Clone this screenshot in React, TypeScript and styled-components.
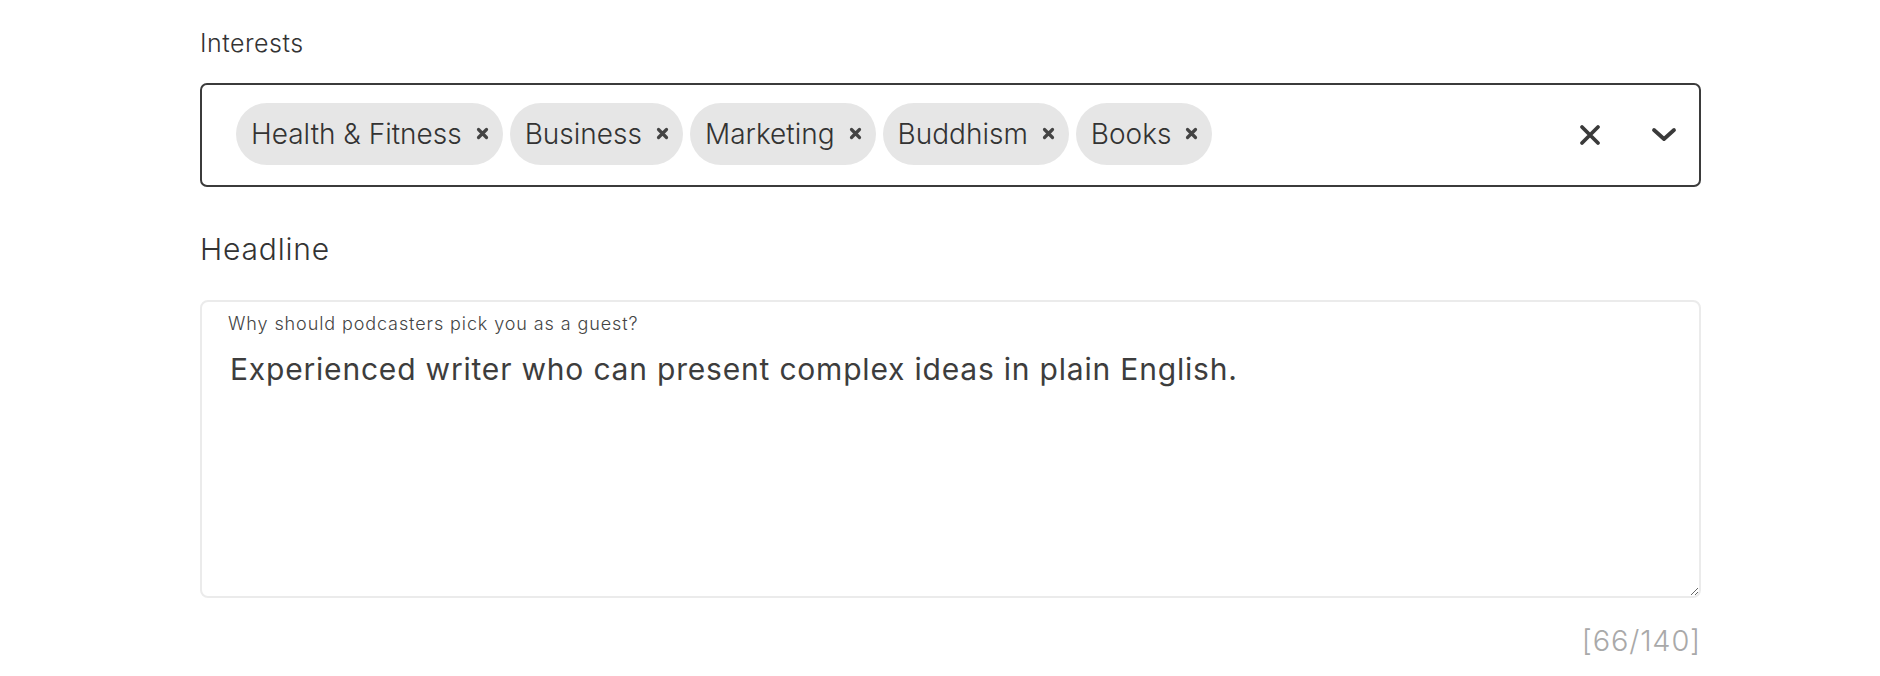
import styled, { createGlobalStyle } from "styled-components";

const GlobalStyle = createGlobalStyle`
  body {
    margin: 0;
    background: #ffffff;
    font-family: "Inter", "Noto Sans", sans-serif;
    color: #333333;
  }
`;

const Page = styled.div`
  width: 1501px;
  padding: 28px 0 0 200px;
`;

const FieldLabel = styled.div<{ $size: number; $spacing: number }>`
  font-size: ${(p) => p.$size}px;
  letter-spacing: ${(p) => p.$spacing}px;
  font-weight: 300;
  line-height: 1.2;
  color: #333333;
`;

const SelectBox = styled.div`
  box-sizing: border-box;
  height: 104px;
  margin-top: 25px;
  border: 2px solid #3b3b3b;
  border-radius: 7px;
  display: flex;
  align-items: center;
  padding: 0 22px 3px 34px;
`;

const ChipList = styled.div`
  flex: 1;
  display: flex;
  align-items: center;
  gap: 7px;
`;

const Chip = styled.div`
  height: 62px;
  display: flex;
  align-items: center;
  gap: 14px;
  padding: 0 14px 0 15px;
  border-radius: 31px;
  background: #e6e6e6;
  font-size: 28px;
  font-weight: 300;
  color: #333333;
`;

const Indicators = styled.div`
  display: flex;
  align-items: center;
  gap: 50px;
  padding-top: 3px;
`;

const IconButton = styled.span`
  display: flex;
  align-items: center;
  justify-content: center;
  color: #3a3a3a;
`;

const HeadlineLabel = styled(FieldLabel)`
  margin-top: 44px;
`;

const TextBox = styled.div`
  position: relative;
  box-sizing: border-box;
  height: 298px;
  margin-top: 33px;
  border: 2px solid #ebebeb;
  border-radius: 8px;
  overflow: hidden;
`;

const FloatLabel = styled.label`
  position: absolute;
  top: 11px;
  left: 26px;
  font-size: 18px;
  font-weight: 300;
  letter-spacing: 0.9px;
  line-height: 1.2;
  color: #444444;
  pointer-events: none;
`;

const TextArea = styled.textarea`
  box-sizing: border-box;
  display: block;
  width: 100%;
  height: 100%;
  border: none;
  outline: none;
  resize: vertical;
  padding: 49px 20px 10px 28px;
  font-family: "Inter", "Noto Sans", sans-serif;
  font-size: 30px;
  font-weight: 400;
  letter-spacing: 0.8px;
  line-height: 1.2;
  color: #3d3d3d;
  background: transparent;
`;

const Counter = styled.div`
  margin-top: 26px;
  text-align: right;
  font-size: 29px;
  font-weight: 300;
  letter-spacing: 0.8px;
  line-height: 1.2;
  color: #a9a9a9;
`;

const SmallX = () => (
  <svg width="13" height="13" viewBox="0 0 13 13">
    <path d="M2.5 2.5 L10.5 10.5 M10.5 2.5 L2.5 10.5" stroke="#444" strokeWidth="3.2" strokeLinecap="round" />
  </svg>
);

const interests = ["Health & Fitness", "Business", "Marketing", "Buddhism", "Books"];
const headline = "Experienced writer who can present complex ideas in plain English.";

export default function App() {
  return (
    <>
      <GlobalStyle />
      <Page>
        <FieldLabel $size={25} $spacing={0.5}>Interests</FieldLabel>
        <SelectBox>
          <ChipList>
            {interests.map((name) => (
              <Chip key={name}>
                {name}
                <SmallX />
              </Chip>
            ))}
          </ChipList>
          <Indicators>
            <IconButton>
              <svg width="22" height="22" viewBox="0 0 22 22">
                <path d="M3 3 L19 19 M19 3 L3 19" stroke="#3a3a3a" strokeWidth="3.8" strokeLinecap="round" />
              </svg>
            </IconButton>
            <IconButton>
              <svg width="26" height="16" viewBox="0 0 26 16">
                <path d="M3 3 L13 12 L23 3" fill="none" stroke="#3a3a3a" strokeWidth="3.8" strokeLinecap="round" strokeLinejoin="round" />
              </svg>
            </IconButton>
          </Indicators>
        </SelectBox>
        <HeadlineLabel $size={30} $spacing={0.8}>Headline</HeadlineLabel>
        <TextBox>
          <FloatLabel htmlFor="headline">Why should podcasters pick you as a guest?</FloatLabel>
          <TextArea id="headline" defaultValue={headline} maxLength={140} />
        </TextBox>
        <Counter>[{headline.length}/140]</Counter>
      </Page>
    </>
  );
}
